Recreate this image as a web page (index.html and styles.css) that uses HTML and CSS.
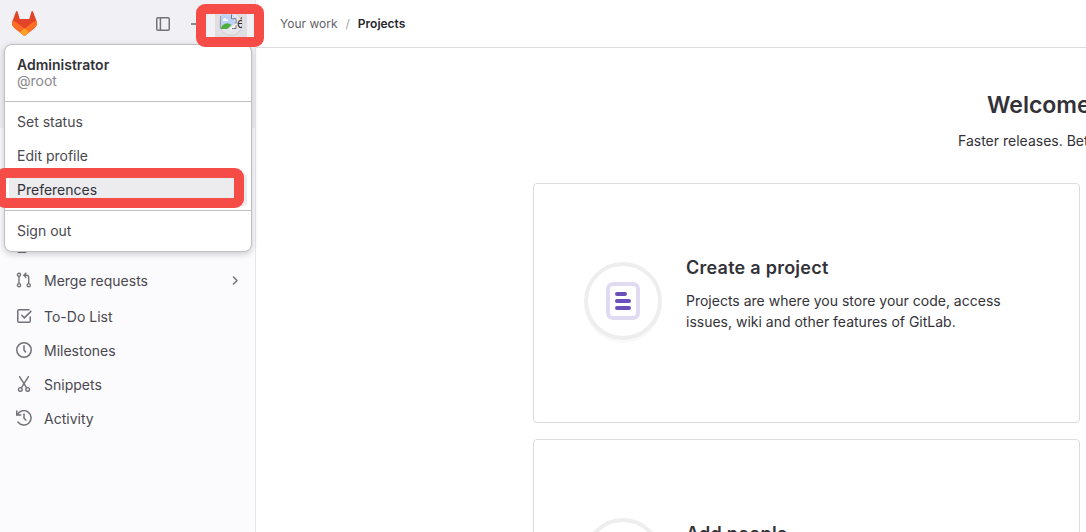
FILE: index.html
```html
<!DOCTYPE html>
<html lang="en">
<head>
<meta charset="utf-8">
<title>Projects</title>
<link rel="stylesheet" href="styles.css">
</head>
<body>
<div class="app">
  <aside class="sidebar">
    <div class="sidebar-top">
      <svg class="logo" width="25" height="25" viewBox="0 0 26 25" preserveAspectRatio="none">
        <path fill="#e24329" d="M25.4 9.7 21.8.5a.8.8 0 0 0-1.5.1l-2.4 7.5H8.1L5.7.6A.8.8 0 0 0 4.2.5L.6 9.7a6.600 6.600 0 0 0 2.200 7.600L13 24.900l10.200-7.600a6.600 6.600 0 0 0 2.200-7.600Z"/>
        <path fill="#fc6d26" d="M25.400 9.700a12 12 0 0 0-4.800 2.200L13 17.600 5.400 11.900A12 12 0 0 0 .6 9.700a6.600 6.600 0 0 0 2.200 7.600L13 24.900l10.200-7.600a6.600 6.600 0 0 0 2.200-7.600Z"/>
        <path fill="#fca326" d="m8.200 21.300 4.100 3.100a1.200 1.200 0 0 0 1.400 0l4.100-3.100L13 17.600Z"/>
      </svg>
      <svg class="collapse" width="16" height="16" viewBox="0 0 16 16" fill="none" stroke="#737278" stroke-width="1.500"><rect x="1.750" y="1.750" width="12.500" height="12.500" rx="1.300"/><path d="M5.400 2v12"/></svg>
      <span class="dash"></span>
      <span class="avatar-button">
        <svg width="24" height="24" viewBox="0 0 24 24">
          <circle cx="12" cy="12" r="11.300" fill="#e6e5ea" stroke="#cfced3"/>
          <path d="M2 2.500h11l4 4v5l-4 1.500-3 4H2Z" fill="#bcd3f7"/>
          <path d="M1.500 4v12.500" stroke="#9a9aa2"/>
          <path d="M12.500 2.500v4.300H17v4.700" fill="#f8f8fa" stroke="#77777e"/>
          <path d="M4 7.500c1-2 3-1.500 3.500 0h1.500v1.500H4Z" fill="#fff"/>
          <path d="M1.500 17c1-4 5.500-7.500 9.500-5l1.500 1-4.500 4Z" fill="#4fae38"/>
          <path d="m10 17.500 7.500-6v1.800l-4.500 4.200Z" fill="#fff"/>
          <path d="M13 16.500h4v-3.300" fill="none" stroke="#77777e"/>
        </svg>
        <span class="avatar-alt">é</span>
      </span>
    </div>
    <nav class="nav">
      <a class="item issues"><svg width="16" height="16" viewBox="0 0 16 16" fill="none" stroke="#737278" stroke-width="1.500"><rect x="1.750" y="1.750" width="8.500" height="12.500" rx="1"/></svg><span>Issues</span></a>
      <a class="item merge"><svg width="16" height="16" viewBox="0 0 16 16" fill="none" stroke="#737278" stroke-width="1.400"><circle cx="3" cy="2.800" r="1.600"/><circle cx="3" cy="13.200" r="1.600"/><circle cx="12.700" cy="13.200" r="1.600"/><path d="M3 4.400v7.200M12.700 11.600V5.200a2 2 0 0 0-2-2H8.500M10.300.7 7.800 3.200l2.500 2.500"/></svg><span>Merge requests</span><svg class="chevron" width="12" height="12" viewBox="0 0 12 12" fill="none" stroke="#737278" stroke-width="1.500" stroke-linecap="round" stroke-linejoin="round"><path d="m4.500 3 3.500 3.500L4.500 10"/></svg></a>
      <a class="item"><svg width="16" height="16" viewBox="0 0 16 16" fill="none" stroke="#737278" stroke-width="1.500"><path d="M13 1.750H3c-.7 0-1.250.5-1.250 1.250v10c0 .7.550 1.250 1.250 1.250h10c.7 0 1.250-.5 1.250-1.250V9M5.700 7.200l2.700 2.700 6.500-6.500" stroke-linecap="round"/></svg><span>To-Do List</span></a>
      <a class="item"><svg width="16" height="16" viewBox="0 0 16 16" fill="none" stroke="#737278" stroke-width="1.500"><circle cx="8" cy="8" r="7.250"/><path d="M8 3.800V8l1.500 2" stroke-linecap="round"/></svg><span>Milestones</span></a>
      <a class="item"><svg width="16" height="16" viewBox="0 0 16 16" fill="none" stroke="#737278" stroke-width="1.400"><circle cx="4.300" cy="13.400" r="1.800"/><circle cx="11.700" cy="13.400" r="1.800"/><path d="m3.600.7 7 11.200M12.400.7l-7 11.200" stroke-linecap="round"/></svg><span>Snippets</span></a>
      <a class="item"><svg width="16" height="16" viewBox="0 0 16 16" fill="none" stroke="#737278" stroke-width="1.500"><path d="M1.500 4.500A7.200 7.200 0 1 1 2 12M.75 1v4h4M8 4v4.200l1.800 1.800" stroke-linecap="round"/></svg><span>Activity</span></a>
    </nav>
  </aside>
  <main class="main">
    <header class="crumbs"><span>Your work</span><span class="slash">/</span><strong>Projects</strong></header>
    <div class="welcome">
      <h1>Welcome to GitLab</h1>
      <p>Faster releases. Better code. Less pain.</p>
    </div>
    <div class="cards">
      <section class="card">
        <svg class="illustration" width="80" height="84" viewBox="0 0 80 84">
          <circle cx="40" cy="44" r="38" fill="#f9f9f9"/><circle cx="40" cy="40" r="37" fill="#fff" stroke="#eee" stroke-width="4"/>
          <rect x="25" y="23" width="30" height="34" rx="5" fill="#fff" stroke="#e1dbf1" stroke-width="4"/>
          <path d="M34 33h8M34 40h12M34 47h12" stroke="#6b4fbb" stroke-width="4" stroke-linecap="round"/>
        </svg>
        <div class="card-text"><h2>Create a project</h2><p>Projects are where you store your code, access<br>issues, wiki and other features of GitLab.</p></div>
      </section>
      <section class="card">
        <svg class="illustration" width="80" height="84" viewBox="0 0 80 84"><circle cx="40" cy="44" r="38" fill="#f9f9f9"/><circle cx="40" cy="40" r="37" fill="#fff" stroke="#eee" stroke-width="4"/></svg>
        <div class="card-text"><h2>Add people</h2></div>
      </section>
    </div>
  </main>
</div>
<div class="menu">
  <div class="user"><strong>Administrator</strong><span>@root</span></div>
  <div class="group"><a class="entry">Set status</a><a class="entry">Edit profile</a><a class="entry active">Preferences</a></div>
  <div class="group last"><a class="entry">Sign out</a></div>
</div>
<div class="mark mark-avatar"></div>
<div class="mark mark-preferences"></div>
</body>
</html>
```
FILE: styles.css
```css
* { box-sizing: border-box; }
body { margin: 0; height: 532px; overflow: hidden; position: relative; background: #fff; color: #333238; font-family: Inter, "Noto Sans", sans-serif; font-size: 14px; }
h1, h2, p { margin: 0; }
.app { display: flex; height: 532px; overflow: hidden; }
.sidebar { width: 256px; flex: none; background: #fbfafd; border-right: 1px solid #e7e6ea; }
.sidebar-top { height: 128px; background: #f1f0f4; display: flex; align-items: flex-start; }
.logo { margin: 11px 0 0 12px; }
.collapse { margin: 16px 0 0 118px; }
.dash { width: 8px; height: 2px; margin: 23px 0 0 20px; background: #89888d; }
.avatar-button { display: flex; position: relative; width: 32px; height: 32px; margin: 8px 0 0 16px; padding: 4px; background: #dfdee3; }
.avatar-alt { position: absolute; left: 22px; top: 6px; font-size: 13px; line-height: 18px; width: 5px; overflow: hidden; }
.nav { padding-top: 102px; }
.item { display: flex; align-items: center; height: 34px; padding: 0 14px 0 16px; color: #4a494f; }
.item span { margin-left: 12px; }
.issues { height: 32px; }
.merge { height: 36px; margin-bottom: 1px; }
.chevron { margin-left: auto; }
.main { flex: 1; min-width: 0; overflow: hidden; }
.crumbs { height: 48px; border-bottom: 1px solid #dcdcde; padding-left: 24px; display: flex; align-items: center; font-size: 12px; color: #626168; }
.crumbs strong { color: #28272d; font-weight: 600; }
.slash { margin: 0 8px; color: #a4a3a8; }
.welcome { padding-top: 42px; white-space: nowrap; }
.welcome h1 { margin-left: 731px; font-size: 23px; line-height: 30px; font-weight: 600; }
.welcome p { margin: 11px 0 0 702px; line-height: 20px; }
.cards { padding: 32px 0 0 277px; display: grid; gap: 16px; }
.card { width: 547px; height: 240px; border: 1px solid #dcdcde; border-radius: 4px; display: flex; align-items: flex-start; }
.illustration { margin: 77px 0 0 49px; }
.card-text { margin: 71px 0 0 23px; }
.card:last-child .card-text { margin-top: 81px; }
.card-text h2 { font-size: 18px; line-height: 26px; font-weight: 600; letter-spacing: .25px; }
.card-text p { margin-top: 9px; line-height: 21px; }
.menu { position: absolute; left: 4px; top: 44px; width: 248px; height: 208px; background: #fff; border: 1px solid #bfbfc3; border-radius: 8px; box-shadow: 0 2px 7px #0003; color: #4a494f; }
.user { height: 57px; padding: 12px 12px 0; border-bottom: 1px solid #bfbfc3; }
.user strong, .user span { display: block; line-height: 16px; }
.user strong { font-weight: 600; color: #333238; }
.user span { color: #89888d; }
.group { height: 109px; padding: 4px 4px 2px; border-bottom: 1px solid #bfbfc3; }
.last { border: 0; height: 40px; }
.entry { display: flex; align-items: center; height: 32px; margin-bottom: 2px; padding: 0 0 2px 8px; border-radius: 4px; }
.active { background: #ececef; color: #333238; }
.mark { position: absolute; border: 10px solid #f64c48; }
.mark-avatar { left: 196px; top: 4px; width: 68px; height: 43px; border-radius: 9px; }
.mark-preferences { left: -4px; top: 168px; width: 248px; height: 40px; border-radius: 9px; }
```
